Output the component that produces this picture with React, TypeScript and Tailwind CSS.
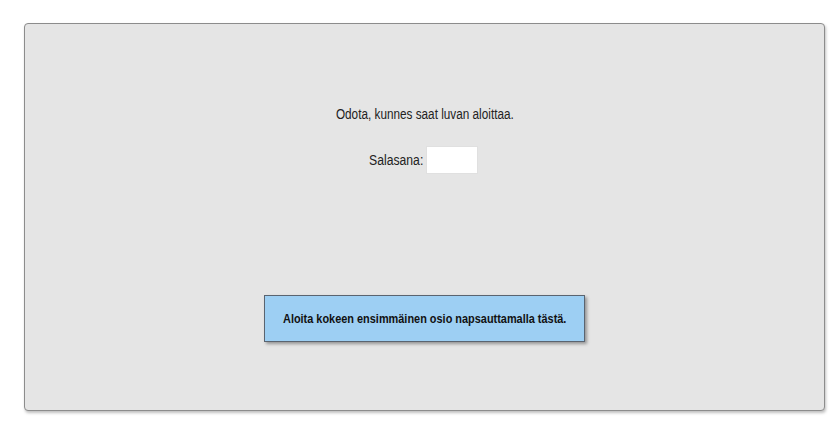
import React from 'react';

export default function App() {
  return (
    <div className="w-[834px] h-[445px] bg-white pt-[23px] pl-[24px]" style={{ fontFamily: '"Liberation Sans", Arial, sans-serif' }}>
      <div className="w-[801px] h-[388px] bg-[#e5e5e5] border border-[#8c8c8c] rounded-[4px] shadow-[1px_2px_3px_rgba(0,0,0,0.25)] flex flex-col items-center pt-[80px]">
        <p className="text-[14px] leading-[20px] text-[#222] scale-x-[0.84]">Odota, kunnes saat luvan aloittaa.</p>

        <div className="mt-[22px] flex items-center gap-[3px]">
          <span className="ml-[-10px] text-[14px] leading-[20px] text-[#222] scale-x-[0.87] origin-right">Salasana:</span>
          <input type="password" className="w-[52px] h-[28px] bg-white border border-[#e0e0e0] outline-none" />
        </div>

        <button className="mt-[121px] w-[321px] h-[47px] bg-[#9dcff3] border border-[#5a6470] shadow-[2px_2px_3px_rgba(0,0,0,0.35)] flex items-center justify-center cursor-pointer">
          <span className="text-[13px] font-bold text-[#111] scale-x-[0.84] whitespace-nowrap">Aloita kokeen ensimmäinen osio napsauttamalla tästä.</span>
        </button>
      </div>
    </div>
  );
}
